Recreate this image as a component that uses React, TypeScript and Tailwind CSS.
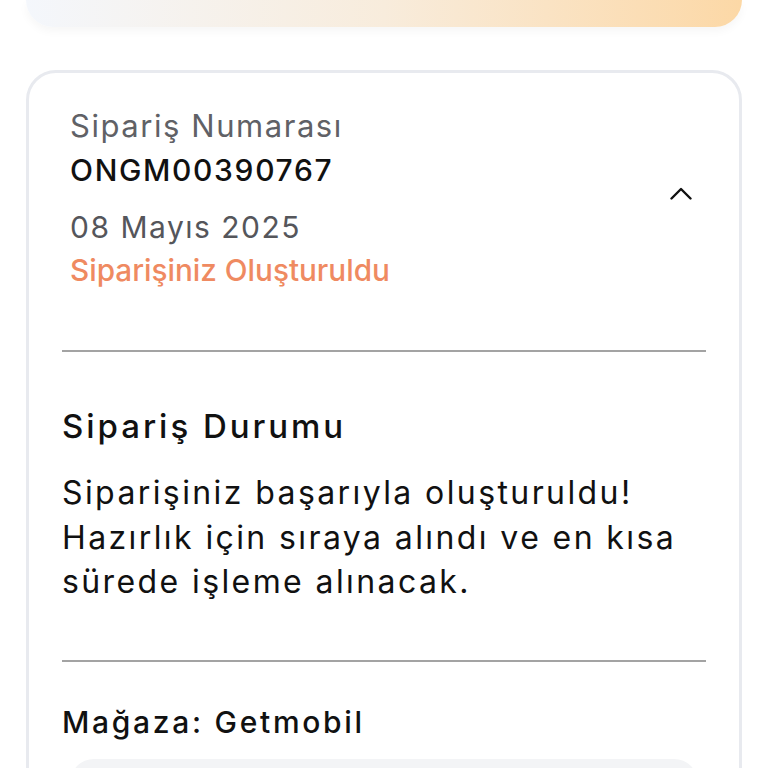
import React from 'react'

const font = { fontFamily: 'Inter, "Noto Sans", sans-serif' }

function ChevronUp() {
  return (
    <svg width="22" height="13" viewBox="0 0 22 13" fill="none" className="mb-2 shrink-0">
      <path d="M1.5 11.5L11 2L20.5 11.5" stroke="#111" strokeWidth="2.4" strokeLinecap="round" strokeLinejoin="round" />
    </svg>
  )
}

export default function App() {
  return (
    <div className="min-h-screen bg-white px-[26px]" style={font}>
      {/* banner above, mostly scrolled off */}
      <div className="h-[27px] rounded-b-[30px] bg-gradient-to-r from-[#f4f7fc] via-[#f8ecdc] to-[#fcd8a6] shadow-[0_4px_10px_rgba(0,0,0,0.04)]" />

      <div className="mt-[43px] rounded-[30px] border-[3px] border-[#e8eaef] px-[33px] pt-[31px] pb-10">
        <div className="flex items-center justify-between pl-2 pr-[14px]">
          <div className="flex flex-col">
            <span className="text-[31px] leading-[44px] tracking-[0.05em] text-[#606166]">Sipariş Numarası</span>
            <span className="text-[30px] leading-[44px] tracking-[0.055em] font-medium text-[#111]">ONGM00390767</span>
            <span className="mt-[13px] text-[30px] leading-[44px] tracking-[0.05em] text-[#55565b]">08 Mayıs 2025</span>
            <span className="text-[29.7px] leading-[42px] font-medium text-[#ef8a61]">Siparişiniz Oluşturuldu</span>
          </div>
          <ChevronUp />
        </div>

        <div className="mt-[59px] h-[2px] bg-[#a3a3a3]" />

        <h2 className="mt-[52px] text-[33px] leading-[44px] tracking-[0.09em] font-medium text-[#111]">Sipariş Durumu</h2>
        <p className="mt-[23px] text-[32px] leading-[44.5px] tracking-[0.075em] text-[#111]">
          Siparişiniz başarıyla oluşturuldu!
          <br />
          Hazırlık için sıraya alındı ve en kısa
          <br />
          sürede işleme alınacak.
        </p>

        <div className="mt-[55px] h-[2px] bg-[#a3a3a3]" />

        <div className="mt-[38px] text-[30px] leading-[44px] tracking-[0.09em] font-medium text-[#111]">Mağaza: Getmobil</div>

        <div className="mx-2 mt-[15px] h-[120px] rounded-[24px] bg-[#f3f4f6]" />
      </div>
    </div>
  )
}
